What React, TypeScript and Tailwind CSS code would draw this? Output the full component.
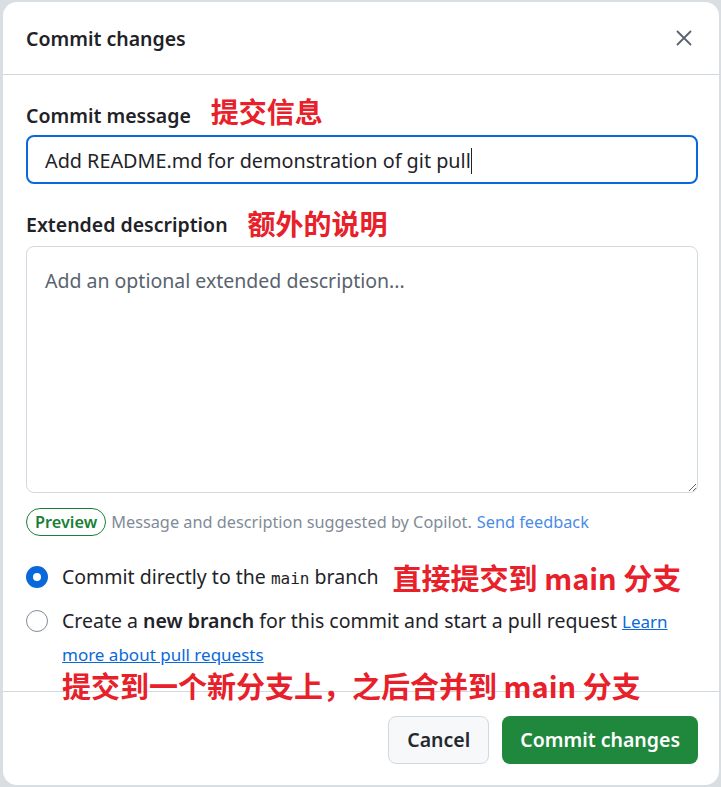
import React from 'react';

const sans = '"Noto Sans", "Open Sans", "Noto Sans CJK SC", sans-serif';
const cjk = '"Noto Sans CJK SC", "Noto Sans", sans-serif';

const Note: React.FC<{ children: React.ReactNode; className?: string }> = ({ children, className }) => (
    <span
        className={`font-bold text-[#e8202a] whitespace-nowrap ${className ?? ''}`}
        style={{ fontFamily: cjk }}
    >
        {children}
    </span>
);

const App: React.FC = () => {
    return (
        <div className="w-[721px] h-[787px] bg-[#d9dee3] pl-[3px] pt-[2px] overflow-hidden" style={{ fontFamily: sans }}>
            <div className="relative w-[716px] h-[783px] bg-white rounded-[14px] flex flex-col text-[#1f2328]">
                {/* header */}
                <div className="h-[73px] shrink-0 flex items-center justify-between pl-[23px] pr-[23px] border-b border-[#d1d9e0]">
                    <h2 className="text-[19.5px] font-semibold mt-[2px]">Commit changes</h2>
                    <button className="p-1 text-[#59636e]">
                        <svg width="16" height="16" viewBox="0 0 16 16" fill="none" stroke="currentColor" strokeWidth="1.8" strokeLinecap="round">
                            <path d="M1.5 1.5 14.5 14.5M14.5 1.5 1.5 14.5" />
                        </svg>
                    </button>
                </div>

                {/* body */}
                <div className="flex-1 pl-[23px] pr-[21px] pt-[24px]">
                    <div className="flex items-center gap-[20px] h-[30px]">
                        <label className="text-[19.5px] font-semibold leading-[28px] mt-[4px]">Commit message</label>
                        <Note className="text-[28px] leading-[30px] relative -top-[3px]">提交信息</Note>
                    </div>
                    <div className="mt-[6px] h-[49px] rounded-[8px] border-2 border-[#0969da] flex items-center pl-[17px] text-[19.8px]">
                        <span className="mt-[2px]">Add README.md for demonstration of git pull</span>
                        <span className="inline-block w-px h-[26px] bg-[#1f2328] mt-[2px]" />
                    </div>

                    <div className="flex items-center gap-[20px] h-[30px] mt-[24px]">
                        <label className="text-[19.5px] font-semibold leading-[28px] mt-[4px]">Extended description</label>
                        <Note className="text-[28px] leading-[30px]">额外的说明</Note>
                    </div>
                    <div className="mt-[8px] h-[247px] rounded-[8px] border border-[#d1d9e0] overflow-hidden">
                        <textarea
                            className="block w-full h-full px-[18px] py-[20px] text-[19.5px] leading-[28px] placeholder:text-[#59636e] outline-none resize-y"
                            placeholder="Add an optional extended description..."
                            style={{ fontFamily: sans }}
                        />
                    </div>

                    <div className="mt-[15px] flex items-center gap-[5px] text-[16.3px]">
                        <span className="h-[28px] px-[8px] rounded-full border border-[#1a7f37] text-[#1a7f37] font-semibold flex items-center">
                            Preview
                        </span>
                        <span className="text-[#818b98]">Message and description suggested by Copilot.</span>
                        <a className="text-[#4a8be6]">Send feedback</a>
                    </div>

                    <div className="mt-[25px] flex flex-col gap-[10px] text-[19.5px] leading-[32px]">
                        <div className="flex items-start gap-[14px]">
                            <span className="mt-[5px] w-[22px] h-[22px] shrink-0 rounded-full border-[7px] border-[#0969da] bg-white" />
                            <span>
                                Commit directly to the{' '}
                                <code className="text-[16px]" style={{ fontFamily: '"DejaVu Sans Mono", monospace' }}>main</code>{' '}
                                branch
                            </span>
                            <Note className="text-[29px] leading-[32px]">直接提交到 main 分支</Note>
                        </div>
                        <div className="flex items-start gap-[14px]">
                            <span className="mt-[5px] w-[22px] h-[22px] shrink-0 rounded-full border border-[#818b98] bg-white" />
                            <span>
                                Create a <b className="font-semibold">new branch</b> for this commit and start a pull request{' '}
                                <a className="text-[#0969da] underline text-[17px]">Learn more about pull requests</a>
                            </span>
                        </div>
                    </div>
                </div>

                {/* footer */}
                <div className="h-[94px] shrink-0 border-t border-[#d1d9e0] flex justify-end items-start gap-[13px] pt-[24px] pr-[21px]">
                    <button className="h-[48px] px-[18px] rounded-[8px] bg-[#f6f8fa] border border-[#d1d9e0] text-[19.5px] font-semibold text-[#25292e]">
                        Cancel
                    </button>
                    <button className="h-[48px] px-[18px] rounded-[8px] bg-[#1f883d] text-white text-[19.5px] font-semibold">
                        Commit changes
                    </button>
                </div>

                <Note className="absolute left-[59px] top-[664px] text-[29px] leading-[38px]">提交到一个新分支上，之后合并到 main 分支</Note>
            </div>
        </div>
    );
};

export default App;
